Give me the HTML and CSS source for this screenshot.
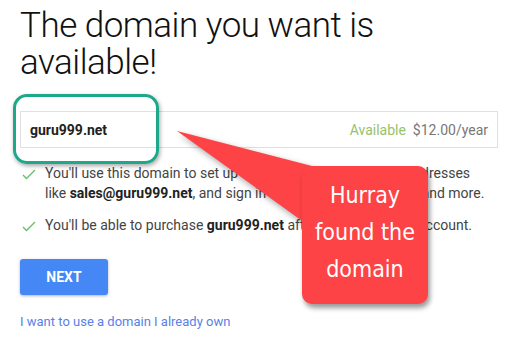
FILE: index.html
```html
<!DOCTYPE html>
<html lang="en">
<head>
  <meta charset="UTF-8" />
  <title>Domain available</title>
  <link rel="stylesheet" href="styles.css">
</head>
<body>

<div id="page">
  <h1>The domain you want is available!</h1>

  <div class="domain-box">
    <span class="domain-name">guru999.net</span>
    <span class="status">Available</span>
    <span class="price">$12.00/year</span>
  </div>

  <ul class="notes">
    <li>
      <svg class="check" width="14" height="11" viewBox="0 0 14 11"><path d="M1 6 L4.5 9.5 L13 1" fill="none" stroke="#6bbf6b" stroke-width="1.4"/></svg>
      <span>You'll use this domain to set up G Suite. Create your email addresses<br>like <b>sales@guru999.net</b>, and sign in to all Gmail, Docs, Drive, and more.</span>
    </li>
    <li>
      <svg class="check" width="14" height="11" viewBox="0 0 14 11"><path d="M1 6 L4.5 9.5 L13 1" fill="none" stroke="#6bbf6b" stroke-width="1.4"/></svg>
      <span>You'll be able to purchase <b>guru999.net</b> after you set up your account.</span>
    </li>
  </ul>

  <button class="next">NEXT</button>

  <a class="own-link" href="#">I want to use a domain I already own</a>

  <!-- annotation overlays -->
  <div class="highlight"></div>
  <svg class="arrow" width="506" height="340" viewBox="0 0 506 340">
    <polygon points="177,131 312,166 312,228" fill="#fd4346"/>
  </svg>
  <div class="callout">Hurray<br>found the<br>domain</div>
</div>

</body>
</html>
```

FILE: styles.css
```css
* { box-sizing: border-box; }
body, html {
  margin: 0;
  background: #fff;
  font-family: Roboto, Arial, sans-serif;
}
#page {
  position: relative;
  width: 506px;
  height: 340px;
  padding: 7px 8px 0 20px;
  overflow: hidden;
}
h1 {
  margin: 0;
  font-size: 35px;
  font-weight: 300;
  letter-spacing: -0.5px;
  line-height: 37px;
  color: #111;
  width: 400px;
}
.domain-box {
  margin-top: 30px;
  width: 478px;
  height: 37px;
  border: 1px solid #e0e0e0;
  display: flex;
  align-items: center;
  padding: 0 9px;
  font-size: 14px;
}
.domain-name {
  font-weight: 700;
  color: #212121;
  flex: 1;
}
.status {
  color: #97c26a;
  margin-right: 7px;
}
.price {
  color: #777;
}
.notes {
  list-style: none;
  margin: 15px 0 0;
  padding: 0;
  font-size: 14px;
  line-height: 20px;
  color: #444;
  white-space: nowrap;
}
.notes li {
  display: flex;
  gap: 9px;
  margin-bottom: 12px;
  padding-left: 2px;
}
.notes b { color: #222; }
.check {
  flex: none;
  margin-top: 6px;
}
.next {
  display: block;
  margin-top: 24px;
  width: 88px;
  height: 36px;
  border: none;
  border-radius: 3px;
  background: #4487f5;
  color: #fff;
  font-family: Roboto, Arial, sans-serif;
  font-size: 14px;
  font-weight: 700;
  box-shadow: 0 1px 3px rgba(0,0,0,0.3);
}
.own-link {
  display: inline-block;
  margin-top: 19px;
  font-size: 13px;
  color: #5a7fe8;
  text-decoration: none;
}
.highlight {
  position: absolute;
  left: 13px;
  top: 94px;
  width: 146px;
  height: 70px;
  border: 3px solid #1ea78b;
  border-radius: 14px;
  box-shadow: 1px 2px 4px rgba(0,0,0,0.35);
}
.arrow {
  position: absolute;
  left: 0;
  top: 0;
  filter: drop-shadow(2px 3px 3px rgba(0,0,0,0.35));
}
.callout {
  position: absolute;
  left: 302px;
  top: 166px;
  width: 126px;
  height: 138px;
  background: #fd4346;
  border-radius: 10px;
  box-shadow: 2px 4px 5px rgba(0,0,0,0.4);
  color: #fff;
  text-align: center;
  font-family: "Liberation Sans Narrow", "DejaVu Sans Condensed", sans-serif;
  font-size: 23px;
  line-height: 37px;
  padding-top: 11px;
}
```
